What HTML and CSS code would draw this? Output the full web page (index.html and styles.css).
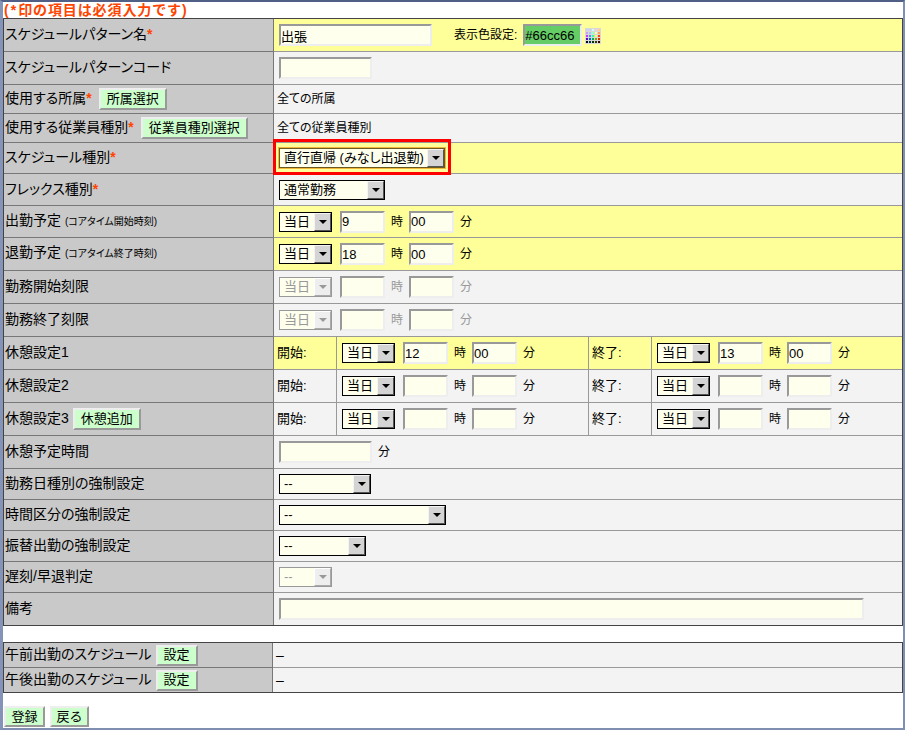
FILE: index.html
```html
<!DOCTYPE html>
<html lang="ja">
<head>
<meta charset="utf-8">
<title>スケジュールパターン</title>
<link rel="stylesheet" href="styles.css">
</head>
<body>
<div class="frame">
  <div class="note"><span class="lead">(*</span>印の項目は必須入力です)</div>
  <table class="grid main">
    <colgroup><col class="c-label"><col class="c-tag"><col class="c-time"><col class="c-tag"><col class="c-last"></colgroup>
    <tr class="r33 hi">
      <th>スケジュールパターン名<i>*</i></th>
      <td colspan="4"><div class="field"><input class="w153" value="出張"><span class="colorlabel">表示色設定:</span><input class="w59 color" value="#66cc66">
        <svg class="palette" width="16" height="16" viewBox="0 0 16 16">
          <rect width="16" height="16" fill="#d8d8d8"/>
          <rect x="1" y="1" width="2" height="2" fill="#ccccff"/><rect x="4" y="1" width="2" height="2" fill="#ccccee"/><rect x="7" y="1" width="2" height="2" fill="#ccffff"/><rect x="10" y="1" width="2" height="2" fill="#ffcccc"/><rect x="13" y="1" width="2" height="2" fill="#ffcc99"/>
          <rect x="1" y="4" width="2" height="2" fill="#cc99ff"/><rect x="4" y="4" width="2" height="2" fill="#99ccff"/><rect x="7" y="4" width="2" height="2" fill="#99ffcc"/><rect x="10" y="4" width="2" height="2" fill="#ffff99"/><rect x="13" y="4" width="2" height="2" fill="#ff9966"/>
          <rect x="1" y="7" width="2" height="2" fill="#cc33ff"/><rect x="4" y="7" width="2" height="2" fill="#3399ff"/><rect x="7" y="7" width="2" height="2" fill="#33ff99"/><rect x="10" y="7" width="2" height="2" fill="#ffff33"/><rect x="13" y="7" width="2" height="2" fill="#ff3333"/>
          <rect x="1" y="10" width="2" height="2" fill="#6600cc"/><rect x="4" y="10" width="2" height="2" fill="#0066cc"/><rect x="7" y="10" width="2" height="2" fill="#00aa55"/><rect x="10" y="10" width="2" height="2" fill="#999900"/><rect x="13" y="10" width="2" height="2" fill="#cc3300"/>
          <rect x="1" y="13" width="2" height="2" fill="#000033"/><rect x="4" y="13" width="2" height="2" fill="#003333"/><rect x="7" y="13" width="2" height="2" fill="#003300"/><rect x="10" y="13" width="2" height="2" fill="#333300"/><rect x="13" y="13" width="2" height="2" fill="#330000"/>
        </svg></div></td>
    </tr>
    <tr class="r33">
      <th>スケジュールパターンコード</th>
      <td colspan="4"><div class="field"><input class="w93"></div></td>
    </tr>
    <tr class="r29">
      <th><div class="labelrow">使用する所属<i>*</i><button class="btn first w68">所属選択</button></div></th>
      <td colspan="4"><div class="field plain">全ての所属</div></td>
    </tr>
    <tr class="r29">
      <th><div class="labelrow">使用する従業員種別<i>*</i><button class="btn first w107">従業員種別選択</button></div></th>
      <td colspan="4"><div class="field plain">全ての従業員種別</div></td>
    </tr>
    <tr class="r31 hi">
      <th>スケジュール種別<i>*</i></th>
      <td colspan="4"><div class="field">
        <span class="sel w166 focus"><select><option>直行直帰 (みなし出退勤)</option></select><span class="arrow"></span><span class="callout"></span></span>
      </div></td>
    </tr>
    <tr class="r32">
      <th>フレックス種別<i>*</i></th>
      <td colspan="4"><div class="field"><span class="sel w106"><select><option>通常勤務</option></select><span class="arrow"></span></span></div></td>
    </tr>
    <tr class="r32 hi">
      <th>出勤予定 <small>(コアタイム開始時刻)</small></th>
      <td colspan="4"><div class="field"><span class="sel w53"><select><option>当日</option></select><span class="arrow"></span></span><input class="w45" value="9"><span class="unit">時</span><input class="w45" value="00"><span class="unit">分</span></div></td>
    </tr>
    <tr class="r33 hi">
      <th>退勤予定 <small>(コアタイム終了時刻)</small></th>
      <td colspan="4"><div class="field"><span class="sel w53"><select><option>当日</option></select><span class="arrow"></span></span><input class="w45" value="18"><span class="unit">時</span><input class="w45" value="00"><span class="unit">分</span></div></td>
    </tr>
    <tr class="r33">
      <th>勤務開始刻限</th>
      <td colspan="4"><div class="field off"><span class="sel w53"><select disabled><option>当日</option></select><span class="arrow"></span></span><input class="w45" disabled><span class="unit">時</span><input class="w45" disabled><span class="unit">分</span></div></td>
    </tr>
    <tr class="r33">
      <th>勤務終了刻限</th>
      <td colspan="4"><div class="field off"><span class="sel w53"><select disabled><option>当日</option></select><span class="arrow"></span></span><input class="w45" disabled><span class="unit">時</span><input class="w45" disabled><span class="unit">分</span></div></td>
    </tr>
    <tr class="r33 hi">
      <th>休憩設定1</th>
      <td class="tag">開始:</td>
      <td class="sep"><div class="field"><span class="sel w53"><select><option>当日</option></select><span class="arrow"></span></span><input class="w45" value="12"><span class="unit">時</span><input class="w45" value="00"><span class="unit">分</span></div></td>
      <td class="tag">終了:</td>
      <td><div class="field"><span class="sel w53"><select><option>当日</option></select><span class="arrow"></span></span><input class="w45" value="13"><span class="unit">時</span><input class="w45" value="00"><span class="unit">分</span></div></td>
    </tr>
    <tr class="r33">
      <th>休憩設定2</th>
      <td class="tag">開始:</td>
      <td class="sep"><div class="field"><span class="sel w53"><select><option>当日</option></select><span class="arrow"></span></span><input class="w45"><span class="unit">時</span><input class="w45"><span class="unit">分</span></div></td>
      <td class="tag">終了:</td>
      <td><div class="field"><span class="sel w53"><select><option>当日</option></select><span class="arrow"></span></span><input class="w45"><span class="unit">時</span><input class="w45"><span class="unit">分</span></div></td>
    </tr>
    <tr class="r33">
      <th><div class="labelrow">休憩設定3<button class="btn w68">休憩追加</button></div></th>
      <td class="tag">開始:</td>
      <td class="sep"><div class="field"><span class="sel w53"><select><option>当日</option></select><span class="arrow"></span></span><input class="w45"><span class="unit">時</span><input class="w45"><span class="unit">分</span></div></td>
      <td class="tag">終了:</td>
      <td><div class="field"><span class="sel w53"><select><option>当日</option></select><span class="arrow"></span></span><input class="w45"><span class="unit">時</span><input class="w45"><span class="unit">分</span></div></td>
    </tr>
    <tr class="r33">
      <th>休憩予定時間</th>
      <td colspan="4"><div class="field"><input class="w93"><span class="unit">分</span></div></td>
    </tr>
    <tr class="r31">
      <th>勤務日種別の強制設定</th>
      <td colspan="4"><div class="field"><span class="sel w92"><select><option>--</option></select><span class="arrow"></span></span></div></td>
    </tr>
    <tr class="r31">
      <th>時間区分の強制設定</th>
      <td colspan="4"><div class="field"><span class="sel w167"><select><option>--</option></select><span class="arrow"></span></span></div></td>
    </tr>
    <tr class="r31">
      <th>振替出勤の強制設定</th>
      <td colspan="4"><div class="field"><span class="sel w87"><select><option>--</option></select><span class="arrow"></span></span></div></td>
    </tr>
    <tr class="r31">
      <th>遅刻/早退判定</th>
      <td colspan="4"><div class="field off"><span class="sel w53"><select disabled><option>--</option></select><span class="arrow"></span></span></div></td>
    </tr>
    <tr class="r32 end">
      <th>備考</th>
      <td colspan="4"><div class="field"><input class="w585"></div></td>
    </tr>
  </table>

  <table class="grid sub">
    <colgroup><col class="c-sublabel"><col></colgroup>
    <tr class="r25">
      <th><div class="labelrow">午前出勤のスケジュール<button class="btn w42 short">設定</button></div></th>
      <td><div class="dash">–</div></td>
    </tr>
    <tr class="r24 end">
      <th><div class="labelrow">午後出勤のスケジュール<button class="btn w42 short">設定</button></div></th>
      <td><div class="dash">–</div></td>
    </tr>
  </table>

  <div class="actions">
    <button class="btn w41 short">登録</button>
    <button class="btn w39 short">戻る</button>
  </div>
</div>
</body>
</html>
```

FILE: styles.css
```css
* { box-sizing: border-box; }
html, body { margin: 0; padding: 0; }
body {
  width: 905px;
  height: 730px;
  overflow: hidden;
  background: #fff;
  color: #000;
  font: 13px/16px "Liberation Sans", "Noto Sans CJK JP", sans-serif;
  font-feature-settings: "palt";
}
.frame {
  width: 905px;
  height: 730px;
  background: #fff;
  border-style: solid;
  border-width: 2px 2px 2px 3px;
  border-color: #4f5f86 #7f8fb2 #7f8fb2 #8494b8;
}
.note {
  height: 16px;
  padding-left: 1px;
  color: #ff4400;
  font-size: 14px;
  font-weight: bold;
  line-height: 16px;
  font-feature-settings: normal;
  letter-spacing: .9px;
}
.lead { letter-spacing: 2px; }
.grid {
  width: 900px;
  table-layout: fixed;
  border-collapse: separate;
  border-spacing: 0;
  border: 1px solid #444;
}
.c-label { width: 270px; }
.c-tag { width: 63px; }
.c-time { width: 252px; }
.c-last { width: 250px; }
.c-sublabel { width: 269px; }
.r24 { height: 24px; }
.r25 { height: 25px; }
.r29 { height: 29px; }
.r31 { height: 31px; }
.r32 { height: 32px; }
.r33 { height: 33px; }
.grid th, .grid td {
  padding: 0;
  background: #f3f3f3;
  border-bottom: 1px solid #999;
  font-weight: normal;
  text-align: left;
  white-space: nowrap;
}
.grid th {
  padding: 0 0 2px 1px;
  background: #c9c9c9;
  border-right: 1px solid #777;
  border-bottom-color: #777;
  font-size: 14px;
}
.grid .hi td { background: #ffff99; }
.grid .end th, .grid .end td { border-bottom: 0; }
.grid td.tag { padding-left: 3px; border-right: 1px solid #999; }
.grid td.sep { border-right: 1px solid #999; }
th i { color: #ff4400; font-style: normal; font-weight: bold; }
th small { font-size: 10px; }
.labelrow { display: flex; align-items: center; }
.labelrow .btn { margin-bottom: -2px; }
.field {
  display: flex;
  align-items: center;
  gap: 6px;
  padding-left: 5px;
}
.field.plain { padding-left: 3px; font-size: 12px; }
.unit { width: 12px; font-size: 12px; }
.off .unit { color: #999; }
.colorlabel { margin-left: 16px; font-size: 12px; }
input {
  height: 22px;
  padding: 0;
  margin: 0;
  background: #ffffee;
  border-style: solid;
  border-width: 2px;
  border-color: #999 #eee #eee #999;
  border-radius: 0;
  outline: 0;
  color: #000;
  font: 13px "Liberation Sans", "Noto Sans CJK JP", sans-serif;
}
.field > .sel + input { margin-left: 2px; }
.w45 { width: 45px; }
.w59 { width: 59px; }
.w93 { width: 93px; }
.w153 { width: 153px; }
.w585 { width: 585px; }
.color { background: #66cc66; }
.palette { margin: 2px 0 0 -3px; }
.sel {
  position: relative;
  display: flex;
  flex: none;
  height: 20px;
  background: #ffffee;
  border: 1px solid #000;
  outline: 0;
}
.sel select {
  flex: 1;
  min-width: 0;
  height: 18px;
  padding: 0 0 0 4px;
  margin: 0;
  background: transparent;
  border: 0;
  border-radius: 0;
  outline: 0;
  appearance: none;
  -webkit-appearance: none;
  color: #000;
  font: 13px/18px "Liberation Sans", "Noto Sans CJK JP", sans-serif;
  font-feature-settings: "palt";
}
.arrow {
  display: flex;
  flex: none;
  align-items: center;
  justify-content: center;
  width: 17px;
  height: 18px;
  background: #d4d4d4;
  border: 1px solid;
  border-color: #f4f4f4 #555 #555 #f4f4f4;
}
.arrow::before {
  content: "";
  border-style: solid;
  border-width: 4px 4px 0;
  border-color: #000 transparent transparent;
}
.off .sel { border-color: #999; }
.off select { color: #999; opacity: 1; }
.off .arrow { background: #eee; border-color: #fff #aaa #aaa #fff; }
.off .arrow::before { border-top-color: #999; }
.focus {
  border-color: #6b5a20;
  box-shadow: 0 0 0 1px #f2b63a;
}
.callout {
  position: absolute;
  top: -10px;
  right: -7px;
  bottom: -8px;
  left: -7px;
  border: 3px solid #f00;
  pointer-events: none;
}
.w53 { width: 53px; }
.w87 { width: 87px; }
.w92 { width: 92px; }
.w106 { width: 106px; }
.w166 { width: 166px; }
.w167 { width: 167px; }
.btn {
  flex: none;
  height: 22px;
  padding: 0;
  margin: 0 0 0 4px;
  background: #ccffcc;
  border-style: solid;
  border-width: 2px;
  border-color: #eee #999 #999 #eee;
  border-radius: 0;
  color: #000;
  font: 13px/16px "Liberation Sans", "Noto Sans CJK JP", sans-serif;
}
.btn.first { margin-left: 7px; }
.btn.short { height: 21px; }
.w39 { width: 39px; }
.w41 { width: 41px; }
.w42 { width: 42px; }
.w68 { width: 68px; }
.w107 { width: 107px; }
.dash { padding-left: 3px; font-size: 14px; }
.sub { margin-top: 16px; }
.actions {
  display: flex;
  gap: 1px;
  margin-top: 13px;
  margin-left: -3px;
}
.actions .btn { margin-left: 4px; }
```
